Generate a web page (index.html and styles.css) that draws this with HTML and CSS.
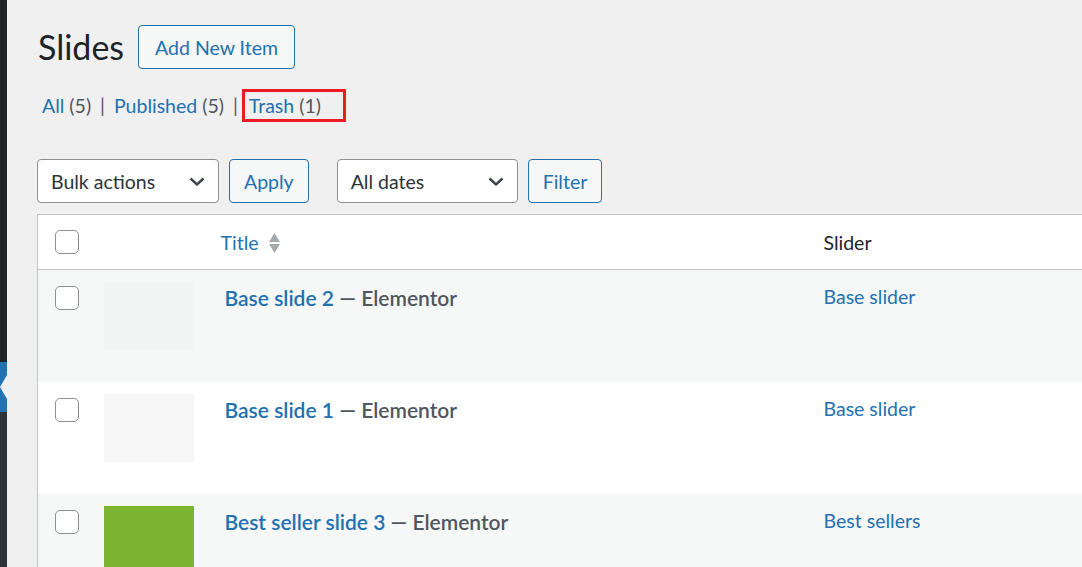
FILE: index.html
```html
<!DOCTYPE html>
<html>
<head>
  <meta charset="UTF-8">
  <title>Slides</title>
  <meta name="viewport" content="width=device-width, initial-scale=1.0">
  <link rel="stylesheet" href="styles.css">
</head>
<body>
  <div class="adminmenu">
    <div class="menu-top"></div>
    <div class="menu-current"><span class="menu-arrow"></span></div>
    <div class="menu-sub"></div>
  </div>

  <div class="main">
    <div class="title-row">
      <h1>Slides</h1>
      <a class="button" href="#">Add New Item</a>
    </div>

    <ul class="subsubsub">
      <li><a href="#">All <span class="count">(5)</span></a><span class="sep">|</span></li>
      <li><a href="#">Published <span class="count">(5)</span></a><span class="sep">|</span></li>
      <li class="marked"><a href="#">Trash <span class="count">(1)</span></a></li>
    </ul>

    <div class="tablenav">
      <div class="select bulk">Bulk actions
        <svg width="16" height="9" viewBox="0 0 16 9"><path d="M1.5 1.5 L8 7.5 L14.5 1.5" fill="none" stroke="#3c434a" stroke-width="2.4"/></svg>
      </div>
      <a class="button small" href="#">Apply</a>
      <div class="select dates">All dates
        <svg width="16" height="9" viewBox="0 0 16 9"><path d="M1.5 1.5 L8 7.5 L14.5 1.5" fill="none" stroke="#3c434a" stroke-width="2.4"/></svg>
      </div>
      <a class="button small" href="#">Filter</a>
    </div>

    <table class="list">
      <colgroup>
        <col class="c-cb"><col class="c-thumb"><col class="c-title"><col class="c-slider">
      </colgroup>
      <thead>
        <tr>
          <th class="cb"><span class="checkbox"></span></th>
          <th></th>
          <th class="title-head"><a href="#">Title</a>
            <svg class="sort" width="11" height="20" viewBox="0 0 11 20"><path d="M5.5 0 L11 9 L0 9 Z M0 11 L11 11 L5.5 20 Z" fill="#a7aaad"/></svg>
          </th>
          <th class="slider-head">Slider</th>
        </tr>
      </thead>
      <tbody>
        <tr class="alt">
          <td class="cb"><span class="checkbox"></span></td>
          <td class="thumb"><div class="img faint"></div></td>
          <td class="row-title"><a href="#">Base slide 2</a> — Elementor</td>
          <td class="slider"><a href="#">Base slider</a></td>
        </tr>
        <tr>
          <td class="cb"><span class="checkbox"></span></td>
          <td class="thumb"><div class="img blank"></div></td>
          <td class="row-title"><a href="#">Base slide 1</a> — Elementor</td>
          <td class="slider"><a href="#">Base slider</a></td>
        </tr>
        <tr class="alt">
          <td class="cb"><span class="checkbox"></span></td>
          <td class="thumb"><div class="img green"></div></td>
          <td class="row-title"><a href="#">Best seller slide 3</a> — Elementor</td>
          <td class="slider"><a href="#">Best sellers</a></td>
        </tr>
      </tbody>
    </table>
  </div>
</body>
</html>
```

FILE: styles.css
```css
body {
  margin: 0;
  background: #f0f0f1;
  color: #1d2327;
  font-family: Lato, "Liberation Sans", sans-serif;
  display: flex;
  height: 100vh;
  overflow: hidden;
}
a { color: #2271b1; text-decoration: none; }

/* admin menu edge */
.adminmenu { width: 7px; flex: none; display: flex; flex-direction: column; }
.menu-top { height: 362px; background: #1d2327; }
.menu-current {
  height: 50px;
  background: #2271b1;
  display: flex;
  justify-content: flex-end;
  align-items: center;
}
.menu-arrow {
  width: 0; height: 0;
  border-right: 7px solid #f0f0f1;
  border-top: 12px solid transparent;
  border-bottom: 12px solid transparent;
}
.menu-sub { flex: 1; background: #2c3338; }

.main { flex: 1; padding-left: 30px; overflow: hidden; }

.title-row { display: flex; align-items: center; gap: 14px; padding-top: 25px; }
h1 { margin: 0 0 0 1px; font-size: 34px; font-weight: 400; line-height: 44px; }

.button {
  display: inline-flex;
  align-items: center;
  height: 44px;
  box-sizing: border-box;
  padding: 0 16px;
  border: 1px solid #2271b1;
  border-radius: 4px;
  background: #f6f7f7;
  color: #2271b1;
  font-size: 19.5px;
}
.button.small { padding: 0 14px; }

.subsubsub {
  list-style: none;
  margin: 20px 0 0 5px;
  padding: 0;
  display: flex;
  align-items: center;
  font-size: 19.5px;
  line-height: 25px;
}
.subsubsub .count { color: #50575e; }
.subsubsub .sep { color: #50575e; margin: 0 9px; }
.subsubsub .marked { border: 3px solid #ed1c24; padding: 1px 22px 1px 4px; margin-left: -5px; }

.tablenav { display: flex; align-items: center; gap: 10px; margin-top: 37px; }
.select {
  height: 44px;
  box-sizing: border-box;
  border: 1px solid #8c8f94;
  border-radius: 4px;
  background: #fff;
  display: flex;
  align-items: center;
  justify-content: space-between;
  padding: 0 13px 0 13px;
  font-size: 19.5px;
  color: #2c3338;
}
.select.bulk { width: 182px; }
.select.dates { width: 181px; margin-left: 18px; }

.list {
  margin-top: 11px;
  width: 1100px;
  border: 1px solid #c3c4c7;
  border-collapse: collapse;
  table-layout: fixed;
  background: #fff;
}
.c-cb { width: 57px; }
.c-thumb { width: 116px; }
.c-title { width: 603px; }

thead tr { height: 55px; }
thead th { border-bottom: 1px solid #c3c4c7; text-align: left; font-weight: 400; font-size: 19.5px; padding: 0; }
th.cb { padding-left: 17px; }
.title-head { padding-left: 10px; }
.title-head .sort { vertical-align: -3px; margin-left: 5px; }
.slider-head { padding-left: 10px; }

.checkbox {
  display: block;
  width: 24px; height: 24px;
  box-sizing: border-box;
  border: 1.5px solid #8c8f94;
  border-radius: 5px;
  background: #fff;
}

tbody tr { height: 112px; }
tbody tr.alt { background: #f6f7f7; }
tbody td { vertical-align: top; padding: 0; }
td.cb { padding: 16px 0 0 17px; }
td.thumb { padding: 12px 0 0 9px; }
.img { width: 90px; height: 68px; }
.img.faint { background: #f3f4f4; }
.img.blank { background: #f6f6f6; }
.img.green { background: #7cb432; }
.row-title { padding: 15px 10px 0 14px; font-size: 21px; font-weight: 600; color: #50575e; }
td.slider { padding: 15px 10px 0 10px; font-size: 19.5px; }
```
